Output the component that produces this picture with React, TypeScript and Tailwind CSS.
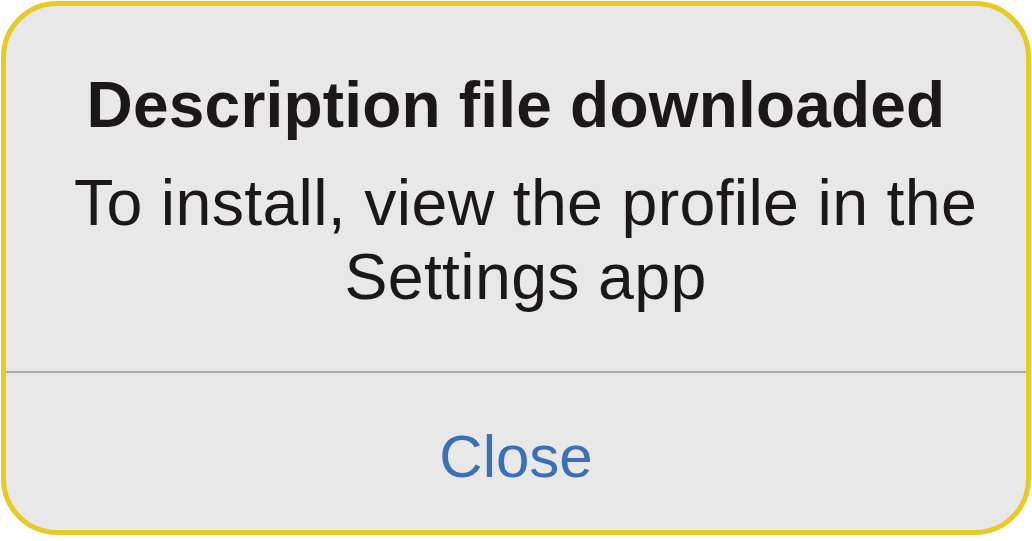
export default function App() {
  return (
    <div className="w-[1032px] h-[541px] bg-white" style={{ fontFamily: '"Liberation Sans", Arial, sans-serif' }}>
      <div className="w-[1030px] h-[534px] ml-px mt-px rounded-[56px] border-[5px] border-[#e9c925] bg-[#e8e8e9] flex flex-col overflow-hidden">
        <div className="h-[365px] flex flex-col items-center pt-[61px]">
          <h1 className="text-[64px] leading-[76px] font-bold text-[#1d1818] tracking-[0.2px]">Description file downloaded</h1>
          <p className="mt-[23px] pl-[19px] text-[64.5px] leading-[74px] text-[#1d1818] text-center tracking-[0.3px]">
            To install, view the profile in the
            <br />
            Settings app
          </p>
        </div>
        <div className="h-[2px] bg-[#adadad]" />
        <div className="flex-1 flex items-center justify-center pt-[10px]">
          <button className="text-[60px] text-[#3b6fb6] leading-none">Close</button>
        </div>
      </div>
    </div>
  );
}
